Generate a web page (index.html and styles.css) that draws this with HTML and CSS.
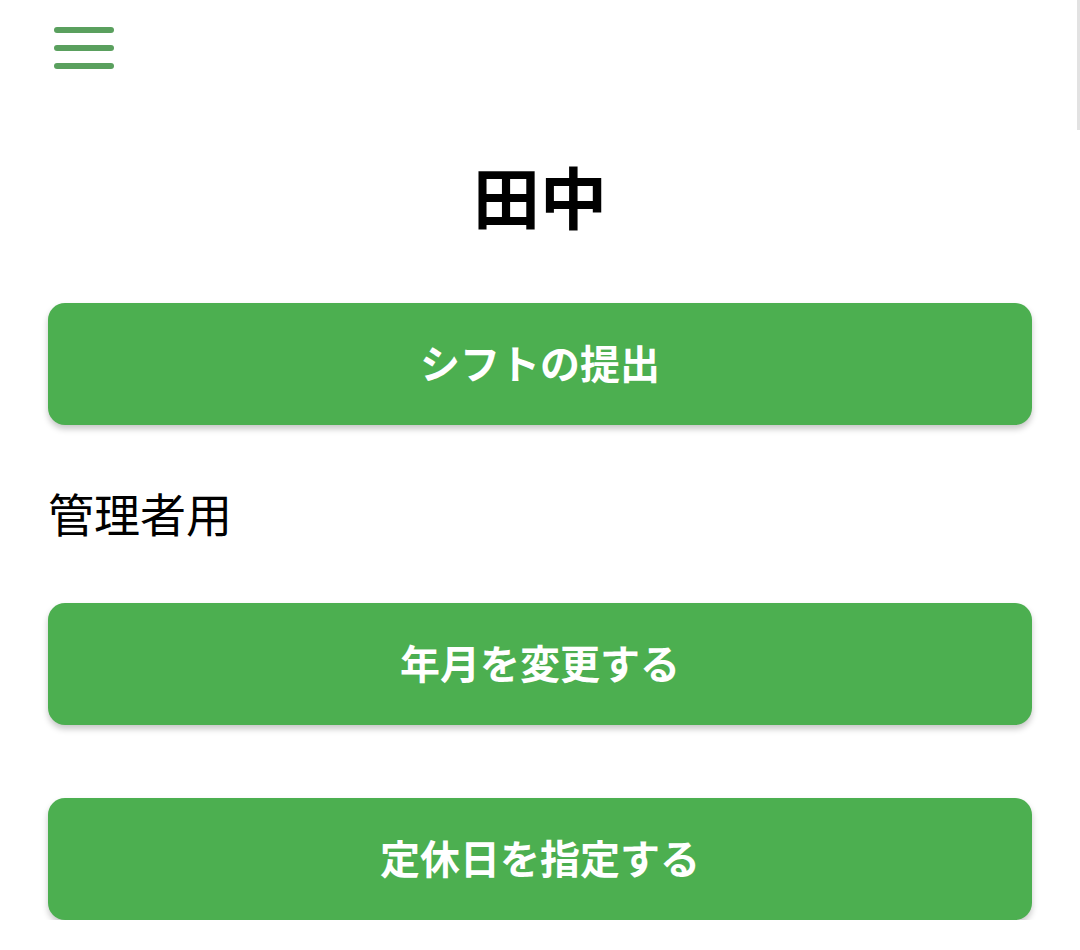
FILE: index.html
```html
<!DOCTYPE html>
<html lang="ja">

<head>
    <meta charset="UTF-8" />
    <meta name="viewport" content="width=device-width, initial-scale=1.0" />
    <title>シフト管理</title>
    <link rel="stylesheet" href="styles.css">
</head>

<body>
    <div class="container">
        <header class="topbar">
            <button class="menu-btn" aria-label="メニュー">
                <svg width="60" height="42" viewBox="0 0 60 42">
                    <rect x="0" y="0" width="60" height="6" rx="3" />
                    <rect x="0" y="18" width="60" height="6" rx="3" />
                    <rect x="0" y="36" width="60" height="6" rx="3" />
                </svg>
            </button>
        </header>
        <main>
            <h1 class="user-name">田中</h1>

            <button class="action-btn first">シフトの提出</button>

            <p class="section-label">管理者用</p>

            <button class="action-btn">年月を変更する</button>
            <button class="action-btn last">定休日を指定する</button>
        </main>
    </div>
    <div class="scroll-indicator"></div>
</body>

</html>
```

FILE: styles.css
```css
/* Reset some default styles */
* {
    box-sizing: border-box;
    margin: 0;
    padding: 0;
}

body {
    font-family: "Noto Sans CJK JP", "Noto Sans", sans-serif;
    background-color: #ffffff;
    color: #000000;
}

.container {
    padding: 0 48px;
}

.topbar {
    height: 96px;
    padding-top: 27px;
    padding-left: 6px;
}

.menu-btn {
    display: block;
    border: none;
    background: none;
    cursor: pointer;
}

.menu-btn svg {
    display: block;
    fill: #5aa05e;
}

.user-name {
    font-size: 67px;
    font-weight: 700;
    line-height: 80px;
    text-align: center;
    margin: 59px 0 0;
}

.action-btn {
    display: block;
    width: 100%;
    height: 122px;
    padding-bottom: 4px;
    border: none;
    border-radius: 17px;
    background-color: #4caf50;
    color: #ffffff;
    font-family: inherit;
    font-size: 40px;
    font-weight: 700;
    box-shadow: 0 4px 6px rgba(0, 0, 0, 0.22);
    cursor: pointer;
    margin-top: 73px;
}

.action-btn.first {
    margin-top: 68px;
}

.section-label {
    font-size: 46px;
    line-height: 66px;
    margin-top: 54px;
}

.section-label + .action-btn {
    margin-top: 58px;
}

.scroll-indicator {
    position: fixed;
    top: 0;
    right: 0;
    width: 3px;
    height: 130px;
    background-color: #e2e2e2;
}
```
